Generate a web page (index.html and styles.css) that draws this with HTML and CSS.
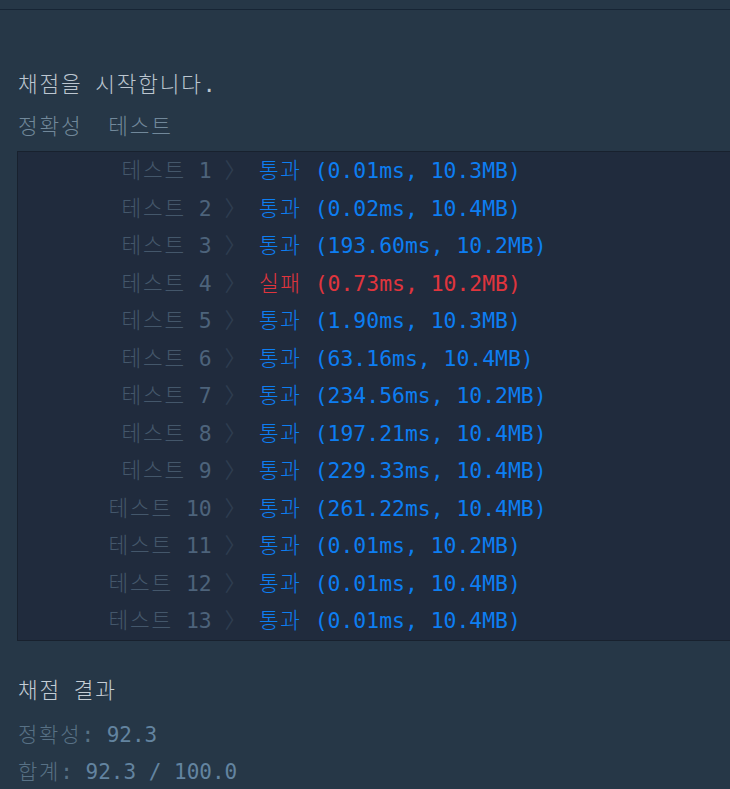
FILE: index.html
```html
<!DOCTYPE html>
<html lang="ko">
<head>
<meta charset="utf-8">
<title>채점</title>
<link rel="stylesheet" href="styles.css">
</head>
<body>
<div class="topbar"></div>
<div class="console">
  <p class="line title"><span class="ko">채점을</span> <span class="ko">시작합니다</span>.</p>
  <p class="line subtitle"><span class="ko">정확성</span>  <span class="ko">테스트</span></p>
  <div class="box">
    <div class="row"><span class="label"><span class="ko">테스트</span> <b>1</b> <i>〉</i></span><span class="pass"><span class="ko">통과</span> (0.01ms, 10.3MB)</span></div>
    <div class="row"><span class="label"><span class="ko">테스트</span> <b>2</b> <i>〉</i></span><span class="pass"><span class="ko">통과</span> (0.02ms, 10.4MB)</span></div>
    <div class="row"><span class="label"><span class="ko">테스트</span> <b>3</b> <i>〉</i></span><span class="pass"><span class="ko">통과</span> (193.60ms, 10.2MB)</span></div>
    <div class="row"><span class="label"><span class="ko">테스트</span> <b>4</b> <i>〉</i></span><span class="fail"><span class="ko">실패</span> (0.73ms, 10.2MB)</span></div>
    <div class="row"><span class="label"><span class="ko">테스트</span> <b>5</b> <i>〉</i></span><span class="pass"><span class="ko">통과</span> (1.90ms, 10.3MB)</span></div>
    <div class="row"><span class="label"><span class="ko">테스트</span> <b>6</b> <i>〉</i></span><span class="pass"><span class="ko">통과</span> (63.16ms, 10.4MB)</span></div>
    <div class="row"><span class="label"><span class="ko">테스트</span> <b>7</b> <i>〉</i></span><span class="pass"><span class="ko">통과</span> (234.56ms, 10.2MB)</span></div>
    <div class="row"><span class="label"><span class="ko">테스트</span> <b>8</b> <i>〉</i></span><span class="pass"><span class="ko">통과</span> (197.21ms, 10.4MB)</span></div>
    <div class="row"><span class="label"><span class="ko">테스트</span> <b>9</b> <i>〉</i></span><span class="pass"><span class="ko">통과</span> (229.33ms, 10.4MB)</span></div>
    <div class="row"><span class="label"><span class="ko">테스트</span> <b>10</b> <i>〉</i></span><span class="pass"><span class="ko">통과</span> (261.22ms, 10.4MB)</span></div>
    <div class="row"><span class="label"><span class="ko">테스트</span> <b>11</b> <i>〉</i></span><span class="pass"><span class="ko">통과</span> (0.01ms, 10.2MB)</span></div>
    <div class="row"><span class="label"><span class="ko">테스트</span> <b>12</b> <i>〉</i></span><span class="pass"><span class="ko">통과</span> (0.01ms, 10.4MB)</span></div>
    <div class="row"><span class="label"><span class="ko">테스트</span> <b>13</b> <i>〉</i></span><span class="pass"><span class="ko">통과</span> (0.01ms, 10.4MB)</span></div>
  </div>
  <p class="line result-title"><span class="ko">채점</span> <span class="ko">결과</span></p>
  <p class="line score"><span class="ko">정확성</span>: <b>92.3</b></p>
  <p class="line score total"><span class="ko">합계</span>: <b>92.3 / 100.0</b></p>
</div>
</body>
</html>
```

FILE: styles.css
```css
html, body {
  margin: 0;
  padding: 0;
  background: #263747;
  overflow: hidden;
}

body {
  font-family: "DejaVu Sans Mono", "Noto Sans CJK KR", monospace;
  font-size: 21.4px;
  width: 730px;
  height: 789px;
}

.ko {
  letter-spacing: 1.8px;
  font-weight: 300;
}

.topbar {
  height: 9px;
  border-bottom: 1px solid #172535;
}

.console {
  padding: 56px 0 0 18px;
}

.line {
  margin: 0;
  line-height: 37px;
  white-space: pre;
}

.title {
  color: #bcc6d0;
}

.subtitle {
  margin-top: 5px;
  color: #71889a;
}

.box {
  margin: 6px 0 0 -1px;
  background: #202b3d;
  border: 1px solid #18212e;
  border-right: none;
}

.row {
  display: grid;
  grid-template-columns: 228px auto;
  column-gap: 12.9px;
  line-height: 37.5px;
  white-space: pre;
}

.label {
  text-align: right;
  color: #44576b;
}

.label b {
  font-weight: normal;
  color: #4d637b;
}

.label i {
  font-style: normal;
  color: #2e3d50;
}

.pass {
  color: #0d7ef2;
}

.fail {
  color: #e0353d;
}

.result-title {
  margin-top: 31px;
  color: #c4cdd5;
}

.score {
  font-size: 21px;
  color: #587185;
}

.score b {
  font-weight: normal;
  color: #6384a0;
}

.score:not(.total) {
  margin-top: 8px;
}
```
